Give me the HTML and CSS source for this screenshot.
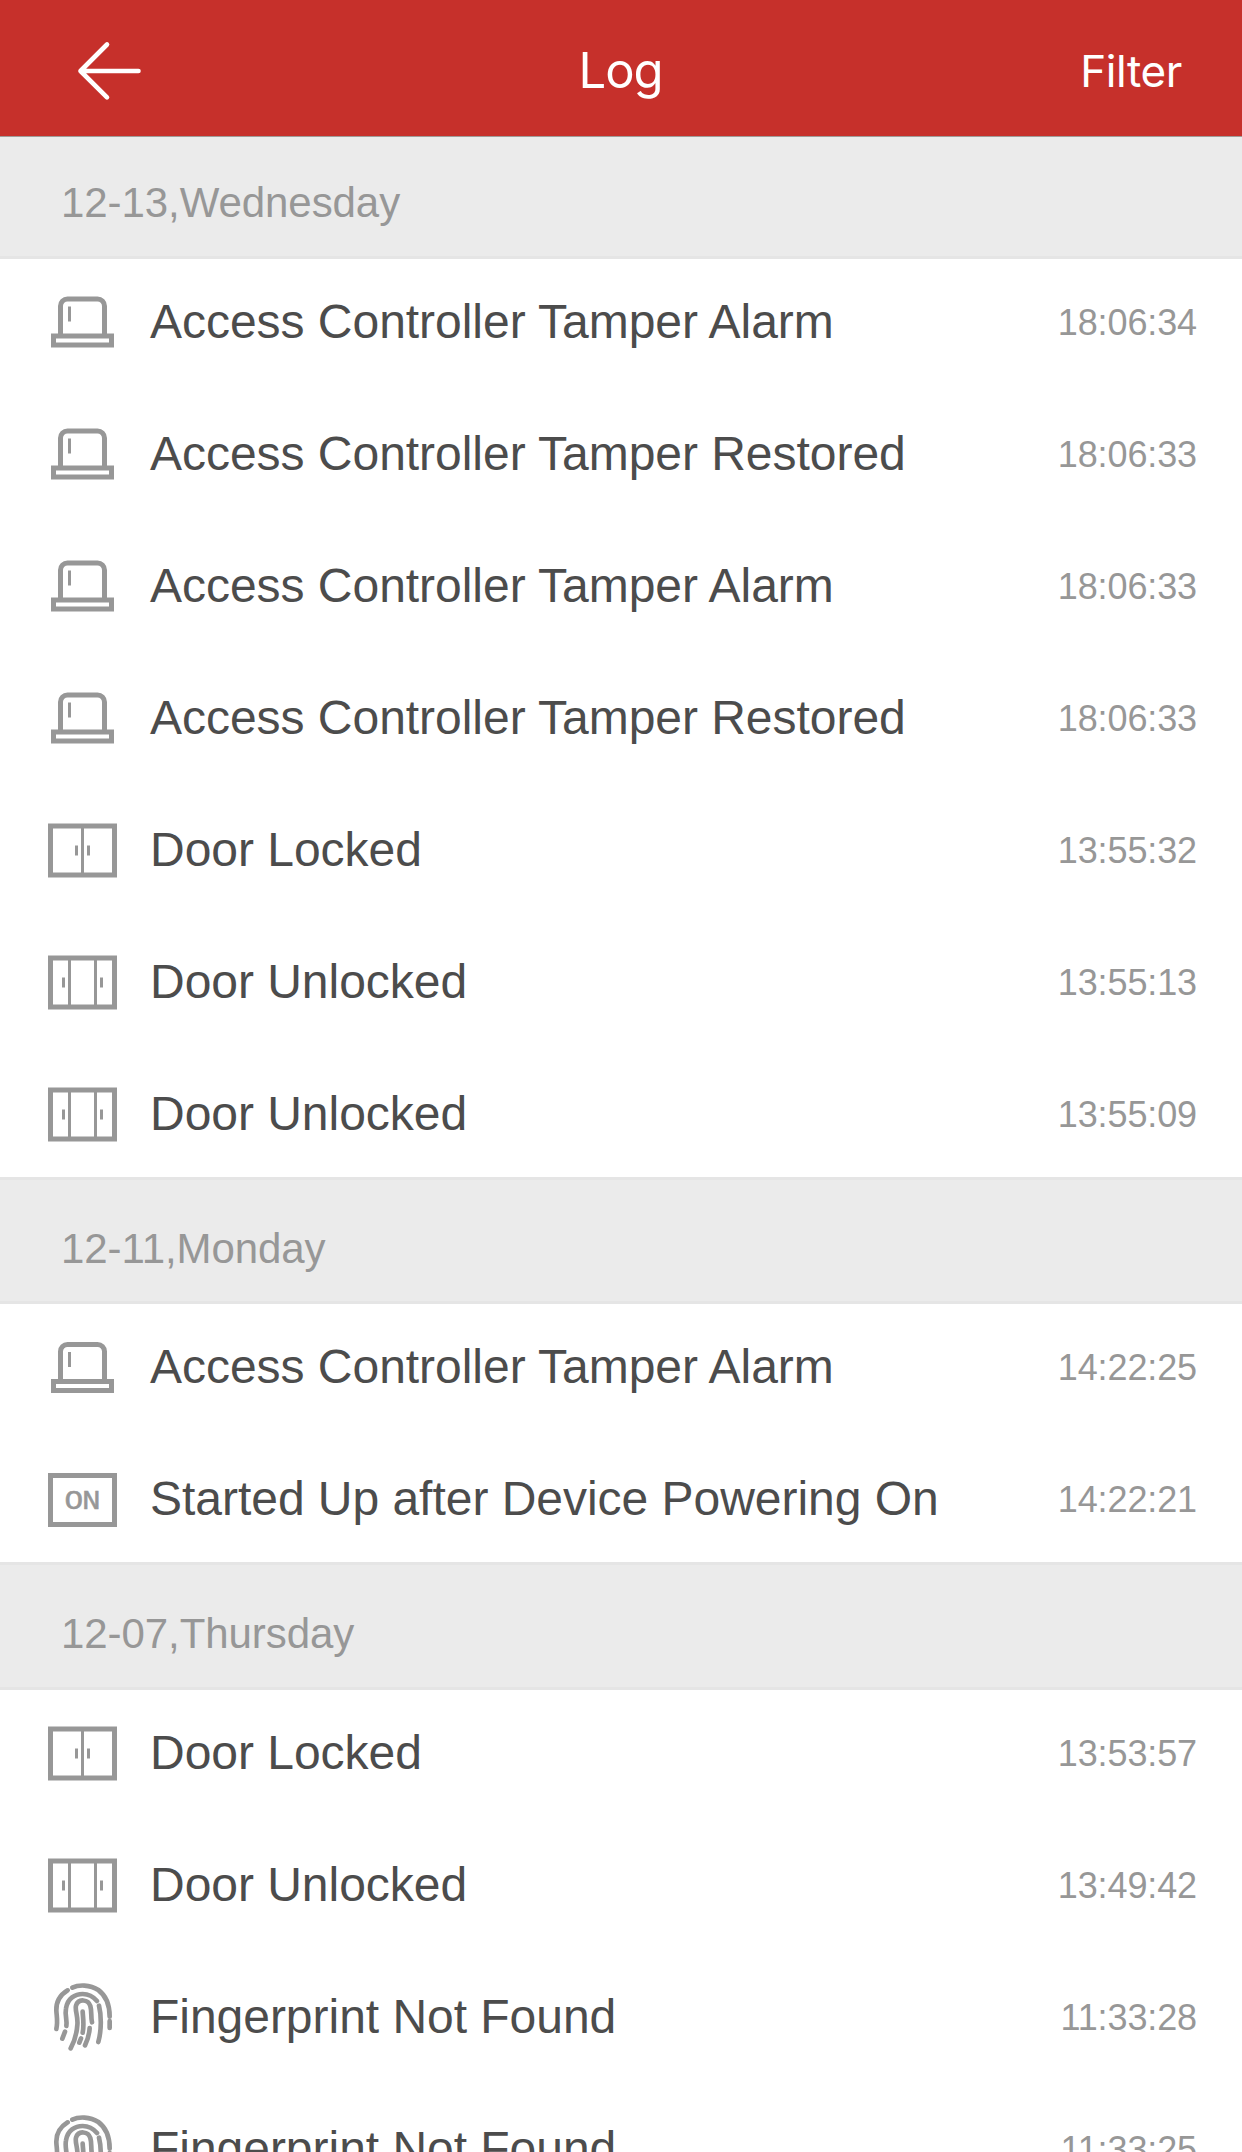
FILE: index.html
```html
<!DOCTYPE html>
<html lang="en">
<head>
<meta charset="utf-8">
<title>Log</title>
<link rel="stylesheet" href="styles.css">
</head>
<body>
<svg class="defs" width="0" height="0">
  <symbol id="tamper" viewBox="0 0 69 72">
    <path d="M12.500 48V19.500a7 7 0 0 1 7-7h30a7 7 0 0 1 7 7V48" stroke-width="5"/>
    <path d="M5.500 49.500h58v9h-58z" stroke-width="5"/>
    <path d="M21.500 20v15" stroke-width="3"/>
  </symbol>
  <symbol id="locked" viewBox="0 0 69 72">
    <path d="M2.500 11.500h64v49h-64z" stroke-width="5"/>
    <path d="M34.500 12v48M28.500 31v10M40.500 31v10" stroke-width="3"/>
  </symbol>
  <symbol id="unlocked" viewBox="0 0 69 72">
    <path d="M2.500 11.500h64v49h-64z" stroke-width="5"/>
    <path d="M21.500 12v48M47.500 12v48M15.500 31v10M53.500 31v10" stroke-width="3"/>
  </symbol>
  <symbol id="finger" viewBox="0 0 69 72">
    <g transform="translate(-18 -11.500) scale(.33333)" stroke-width="14" stroke-linecap="round">
      <path d="M113 61C90 75 78 97 79 122C80 140 84 155 79 177"/>
      <path d="M127 53C145 44 180 43 205 60C228 77 239 100 239 140M239 153V174"/>
      <path d="M109 168C112 150 104 135 108 115C113 85 135 72 158 72C175 72 190 80 201 93"/>
      <path d="M207 107C214 135 215 180 205 216M105 185L97 206"/>
      <path d="M186 157C182 140 186 125 181 108C175 88 145 84 138 107C134 120 145 140 142 165C140 195 133 215 122 235"/>
      <path d="M158 125C159 145 163 165 158 188M153 205L148 218M179 174C178 190 173 210 165 226"/>
    </g>
  </symbol>
</svg>

<header class="bar">
  <svg class="back" viewBox="0 0 66 62"><path d="M30 4.500L3.500 31L30 57.300M3.500 31H61.500"/></svg>
  <h1 class="title">Log</h1>
  <span class="filter">Filter</span>
</header>

<main>
  <section class="day first">
    <h2 class="date">12-13,Wednesday</h2>
    <ul class="rows">
      <li class="row"><svg class="icon"><use href="#tamper"/></svg><span class="event">Access Controller Tamper Alarm</span><time class="time">18:06:34</time></li>
      <li class="row"><svg class="icon"><use href="#tamper"/></svg><span class="event">Access Controller Tamper Restored</span><time class="time">18:06:33</time></li>
      <li class="row"><svg class="icon"><use href="#tamper"/></svg><span class="event">Access Controller Tamper Alarm</span><time class="time">18:06:33</time></li>
      <li class="row"><svg class="icon"><use href="#tamper"/></svg><span class="event">Access Controller Tamper Restored</span><time class="time">18:06:33</time></li>
      <li class="row"><svg class="icon"><use href="#locked"/></svg><span class="event">Door Locked</span><time class="time">13:55:32</time></li>
      <li class="row"><svg class="icon"><use href="#unlocked"/></svg><span class="event">Door Unlocked</span><time class="time">13:55:13</time></li>
      <li class="row"><svg class="icon"><use href="#unlocked"/></svg><span class="event">Door Unlocked</span><time class="time">13:55:09</time></li>
    </ul>
  </section>
  <section class="day second">
    <h2 class="date">12-11,Monday</h2>
    <ul class="rows">
      <li class="row"><svg class="icon"><use href="#tamper"/></svg><span class="event">Access Controller Tamper Alarm</span><time class="time">14:22:25</time></li>
      <li class="row">
        <svg class="icon" viewBox="0 0 69 72">
          <path d="M2.500 12.500h64v49h-64z" stroke-width="5"/>
          <text class="power-text" transform="scale(1.15 1)" x="14.300 29.600" y="46">ON</text>
        </svg>
        <span class="event">Started Up after Device Powering On</span><time class="time">14:22:21</time>
      </li>
    </ul>
  </section>
  <section class="day">
    <h2 class="date">12-07,Thursday</h2>
    <ul class="rows">
      <li class="row"><svg class="icon"><use href="#locked"/></svg><span class="event">Door Locked</span><time class="time">13:53:57</time></li>
      <li class="row"><svg class="icon"><use href="#unlocked"/></svg><span class="event">Door Unlocked</span><time class="time">13:49:42</time></li>
      <li class="row"><svg class="icon"><use href="#finger"/></svg><span class="event">Fingerprint Not Found</span><time class="time">11:33:28</time></li>
      <li class="row"><svg class="icon"><use href="#finger"/></svg><span class="event">Fingerprint Not Found</span><time class="time">11:33:25</time></li>
    </ul>
  </section>
</main>
</body>
</html>
```
FILE: styles.css
```css
* {
  box-sizing: border-box;
}

body {
  margin: 0;
  height: 2152px;
  overflow: hidden;
  background: #fff;
  font-family: "Liberation Sans", Arial, sans-serif;
}

.defs {
  display: block;
  height: 0;
}

.bar {
  display: grid;
  grid-template-columns: 1fr auto 1fr;
  align-items: center;
  height: 137px;
  padding: 5px 60px 0 77px;
  border-bottom: 1px solid #a09b98;
  background: #c6302b;
  color: #fff;
  font-family: Inter, "Liberation Sans", sans-serif;
}

.back {
  width: 66px;
  height: 62px;
  fill: none;
  stroke: #fff;
  stroke-width: 4.600px;
  stroke-linecap: round;
  stroke-linejoin: round;
}

.title {
  margin: 1px 9px 0 -9px;
  font-size: 49px;
  font-weight: 400;
  line-height: 60px;
  letter-spacing: -1px;
}

.filter {
  justify-self: end;
  font-size: 44px;
  line-height: 60px;
  letter-spacing: -.4px;
}

.date {
  display: flex;
  align-items: center;
  height: 122px;
  margin: 0;
  padding: 15px 60px 0 61px;
  background: #ebebeb;
  color: #979797;
  font-size: 42px;
  font-weight: 400;
  letter-spacing: -.07px;
}

.first .date {
  height: 119px;
  padding-top: 12px;
}

.second .date {
  height: 121px;
  padding-top: 17px;
}

.rows {
  margin: 0;
  padding: 0;
  border: solid #e5e5e5;
  border-width: 3px 0;
  list-style: none;
}

.row {
  display: flex;
  align-items: center;
  height: 132px;
  padding: 0 45px 0 48px;
}

.row:first-child {
  margin-top: -3px;
}

.row:last-child {
  margin-bottom: -3px;
}

.icon {
  flex: none;
  width: 69px;
  height: 72px;
  margin-right: 33px;
  fill: none;
  stroke: #979797;
}

.icon use {
  transform: translateY(.5px);
}

.second .icon use {
  transform: translateY(1px);
}

.power-text {
  fill: #979797;
  stroke: #979797;
  stroke-width: .5px;
  font: 27px "Liberation Mono", monospace;
}

.event {
  flex: 1;
  padding-bottom: 2px;
  color: #4c4c4c;
  font-size: 48px;
  letter-spacing: -.03px;
  white-space: nowrap;
}

.time {
  padding-top: 2px;
  color: #979797;
  font-size: 36px;
  letter-spacing: -.12px;
}
```
